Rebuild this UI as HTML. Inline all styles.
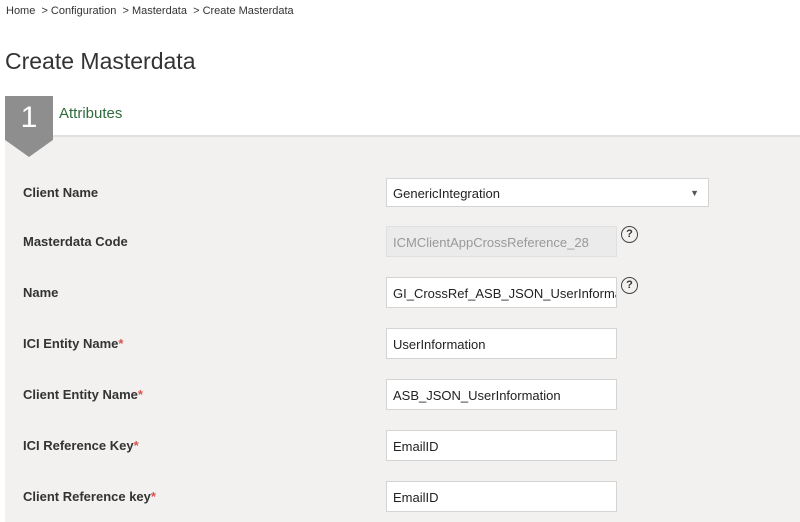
<!DOCTYPE html><html><head><style>
body{margin:0;width:800px;height:522px;overflow:hidden;background:#fff;font-family:"Liberation Sans",sans-serif;color:#333;position:relative}
.a{position:absolute}
.bc{left:6px;top:5px;font-size:11px;color:#333}
h1{position:absolute;left:5px;top:48px;margin:0;font-weight:normal;font-size:23px;color:#333}
.panel{left:5px;top:135px;right:0;bottom:0;background:#f2f1f0;border-top:2px solid #e0e0e0}
.badge{left:5px;top:96px;width:48px;height:61px;background:#8e8e8e;clip-path:polygon(0 0,100% 0,100% 72%,50% 100%,0 72%);color:#fff;font-size:30px;text-align:center;line-height:44px}
.tab{left:59px;top:105px;font-size:15px;color:#2f6b3c}
.lbl{left:23px;font-size:13px;font-weight:bold;color:#333}
.req{color:#d9534f;font-weight:bold}
.in{left:386px;width:229px;height:29px;background:#fff;border:1px solid #d4d4d4;font-size:13px;line-height:29px;padding-left:6px;box-sizing:border-box;white-space:nowrap;overflow:hidden;color:#222}
.q{left:621px;width:15px;height:15px;border:1.5px solid #444;border-radius:50%;font-size:11px;font-weight:bold;text-align:center;line-height:15px;color:#333}
</style></head><body>
<div class="a bc">Home &nbsp;&gt; Configuration &nbsp;&gt; Masterdata &nbsp;&gt; Create Masterdata</div>
<h1>Create Masterdata</h1>
<div class="a panel"></div>
<div class="a badge">1</div>
<div class="a tab">Attributes</div>
<div class="a lbl" style="top:185px">Client Name</div>
<div class="a in" style="top:178px;width:323px;height:29px">GenericIntegration<span style="position:absolute;right:9px;top:0;font-size:9px;color:#555">▼</span></div>
<div class="a lbl" style="top:234px">Masterdata Code</div>
<div class="a in" style="top:226px;width:231px;height:31px;line-height:31px;background:#ebebeb;color:#999;border-color:#e0e0e0">ICMClientAppCrossReference_28</div>
<div class="a q" style="top:226px">?</div>
<div class="a lbl" style="top:285px">Name</div>
<div class="a in" style="top:277px;width:231px;height:31px;line-height:31px">GI_CrossRef_ASB_JSON_UserInformation</div>
<div class="a q" style="top:277px">?</div>
<div class="a lbl" style="top:336px">ICI Entity Name<span class="req">*</span></div>
<div class="a in" style="top:328px;width:231px;height:31px;line-height:31px">UserInformation</div>
<div class="a lbl" style="top:387px">Client Entity Name<span class="req">*</span></div>
<div class="a in" style="top:379px;width:231px;height:31px;line-height:31px">ASB_JSON_UserInformation</div>
<div class="a lbl" style="top:438px">ICI Reference Key<span class="req">*</span></div>
<div class="a in" style="top:430px;width:231px;height:31px;line-height:31px">EmailID</div>
<div class="a lbl" style="top:489px">Client Reference key<span class="req">*</span></div>
<div class="a in" style="top:481px;width:231px;height:31px;line-height:31px">EmailID</div>
</body></html>
